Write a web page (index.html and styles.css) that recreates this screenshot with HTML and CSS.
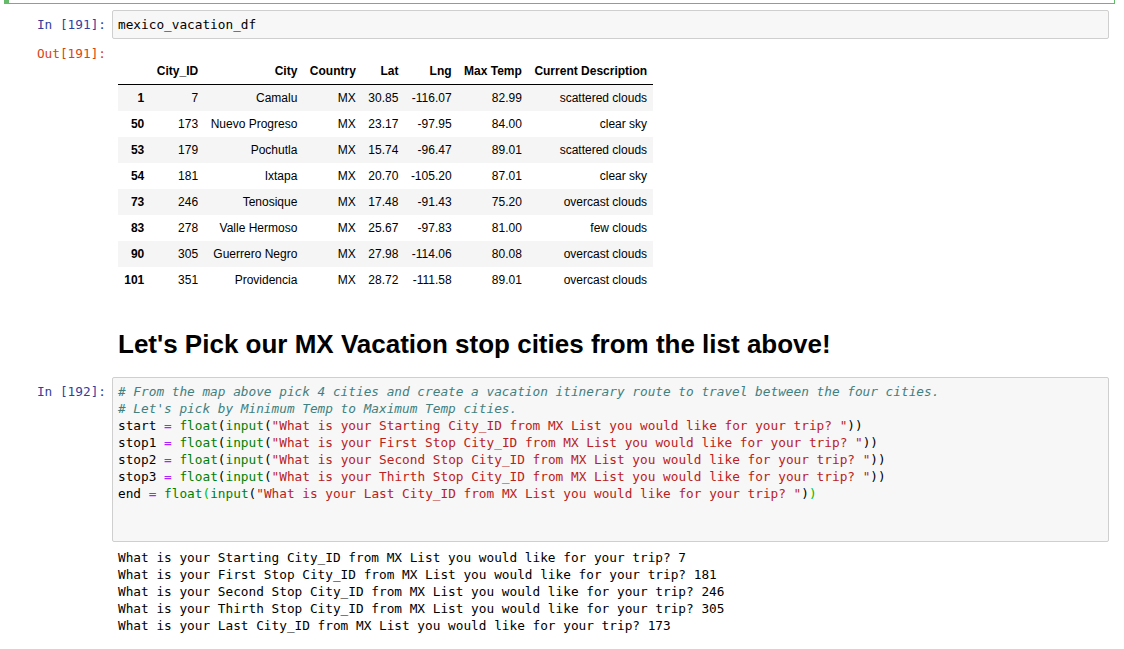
FILE: index.html
```html
<!DOCTYPE html>
<html>
<head>
<meta charset="utf-8">
<link rel="stylesheet" href="styles.css">
</head>
<body>
<div class="nb">
  <div class="edit-tail"></div>

  <div class="cell">
    <div class="row">
      <div class="prompt in">In&nbsp;[191]:</div>
      <div class="input-area"><pre class="code">mexico_vacation_df</pre></div>
    </div>
    <div class="row">
      <div class="prompt out">Out[191]:</div>
      <div class="output-sub">
        <table class="df">
          <thead>
            <tr><th></th><th>City_ID</th><th>City</th><th>Country</th><th>Lat</th><th>Lng</th><th>Max Temp</th><th>Current Description</th></tr>
          </thead>
          <tbody>
            <tr><th>1</th><td>7</td><td>Camalu</td><td>MX</td><td>30.85</td><td>-116.07</td><td>82.99</td><td>scattered clouds</td></tr>
            <tr><th>50</th><td>173</td><td>Nuevo Progreso</td><td>MX</td><td>23.17</td><td>-97.95</td><td>84.00</td><td>clear sky</td></tr>
            <tr><th>53</th><td>179</td><td>Pochutla</td><td>MX</td><td>15.74</td><td>-96.47</td><td>89.01</td><td>scattered clouds</td></tr>
            <tr><th>54</th><td>181</td><td>Ixtapa</td><td>MX</td><td>20.70</td><td>-105.20</td><td>87.01</td><td>clear sky</td></tr>
            <tr><th>73</th><td>246</td><td>Tenosique</td><td>MX</td><td>17.48</td><td>-91.43</td><td>75.20</td><td>overcast clouds</td></tr>
            <tr><th>83</th><td>278</td><td>Valle Hermoso</td><td>MX</td><td>25.67</td><td>-97.83</td><td>81.00</td><td>few clouds</td></tr>
            <tr><th>90</th><td>305</td><td>Guerrero Negro</td><td>MX</td><td>27.98</td><td>-114.06</td><td>80.08</td><td>overcast clouds</td></tr>
            <tr><th>101</th><td>351</td><td>Providencia</td><td>MX</td><td>28.72</td><td>-111.58</td><td>89.01</td><td>overcast clouds</td></tr>
          </tbody>
        </table>
      </div>
    </div>
  </div>

  <div class="cell">
    <div class="row">
      <div class="prompt"></div>
      <div class="text-cell"><h1 class="md-h1">Let's Pick our MX Vacation stop cities from the list above!</h1></div>
    </div>
  </div>

  <div class="cell">
    <div class="row">
      <div class="prompt in">In&nbsp;[192]:</div>
      <div class="input-area"><pre class="code"><span class="cm"># From the map above pick 4 cities and create a vacation itinerary route to travel between the four cities.</span>
<span class="cm"># Let's pick by Minimum Temp to Maximum Temp cities.</span>
start <span class="op">=</span> <span class="bi">float</span>(<span class="bi">input</span>(<span class="st">"What is your Starting City_ID from MX List you would like for your trip? "</span>))
stop1 <span class="op">=</span> <span class="bi">float</span>(<span class="bi">input</span>(<span class="st">"What is your First Stop City_ID from MX List you would like for your trip? "</span>))
stop2 <span class="op">=</span> <span class="bi">float</span>(<span class="bi">input</span>(<span class="st">"What is your Second Stop City_ID from MX List you would like for your trip? "</span>))
stop3 <span class="op">=</span> <span class="bi">float</span>(<span class="bi">input</span>(<span class="st">"What is your Thirth Stop City_ID from MX List you would like for your trip? "</span>))
end <span class="op">=</span> <span class="bi">float</span><span class="mb">(</span><span class="bi">input</span>(<span class="st">"What is your Last City_ID from MX List you would like for your trip? "</span>)<span class="mb">)</span>
 
 </pre></div>
    </div>
    <div class="row">
      <div class="prompt"></div>
      <div class="output-sub stream"><pre class="code">What is your Starting City_ID from MX List you would like for your trip? 7
What is your First Stop City_ID from MX List you would like for your trip? 181
What is your Second Stop City_ID from MX List you would like for your trip? 246
What is your Thirth Stop City_ID from MX List you would like for your trip? 305
What is your Last City_ID from MX List you would like for your trip? 173</pre></div>
    </div>
  </div>
</div>
</body>
</html>
```

FILE: styles.css
```css
html, body {
  margin: 0;
  padding: 0;
  background: #ffffff;
}

body {
  font-family: "Liberation Sans", Arial, sans-serif;
  font-size: 13px;
  color: #000;
}

.nb {
  margin-left: 4px;
  width: 1111px;
}

.edit-tail {
  box-sizing: border-box;
  height: 4px;
  border-left: 5px solid #66bb6a;
  border-right: 1px solid #66bb6a;
  border-bottom: 1px solid #66bb6a;
}

.cell {
  padding: 6px;
}

.row {
  display: flex;
  align-items: flex-start;
}

.prompt {
  box-sizing: border-box;
  flex: 0 0 102px;
  width: 102px;
  padding-right: 6px;
  text-align: right;
  font-family: "DejaVu Sans Mono", "Liberation Mono", monospace;
  font-size: 12.75px;
  line-height: 17px;
  white-space: nowrap;
}

.prompt.in {
  color: #303f9f;
  padding-top: 6px;
}

.prompt.out {
  color: #d84315;
  padding-top: 6px;
}

.input-area {
  flex: 1;
  min-width: 0;
  background: #f7f7f7;
  border: 1px solid #cfcfcf;
  border-radius: 2px;
  padding: 5px;
}

.code {
  margin: 0;
  font-family: "DejaVu Sans Mono", "Liberation Mono", monospace;
  font-size: 12.75px;
  line-height: 17px;
  color: #000;
  white-space: pre;
}

.cm {
  color: #408080;
  font-style: italic;
}

.op {
  color: #aa22ff;
}

.bi {
  color: #008000;
}

.st {
  color: #ba2121;
}

.mb {
  color: #00bb00;
}

.output-sub {
  flex: 1;
  min-width: 0;
  padding: 6px;
}

.output-sub.stream {
  padding-top: 7px;
}

.df {
  margin-top: 13px;
  border-collapse: collapse;
  border-spacing: 0;
  font-family: "Liberation Sans", Arial, sans-serif;
  font-size: 12px;
  color: #000;
}

.df th,
.df td {
  padding: 6px 6.25px;
  line-height: 14px;
  text-align: right;
  vertical-align: middle;
  white-space: nowrap;
}

.df th {
  font-weight: bold;
}

.df thead th {
  border-bottom: 1px solid #000;
}

.df tbody tr:nth-child(odd) {
  background: #f5f5f5;
}

.text-cell {
  flex: 1;
  padding: 7px 6px 8px 6px;
}

.md-h1 {
  margin: 13px 0 0 0;
  font-family: "Liberation Sans", Arial, sans-serif;
  font-size: 26px;
  font-weight: bold;
  line-height: 26px;
  color: #000;
}
```
